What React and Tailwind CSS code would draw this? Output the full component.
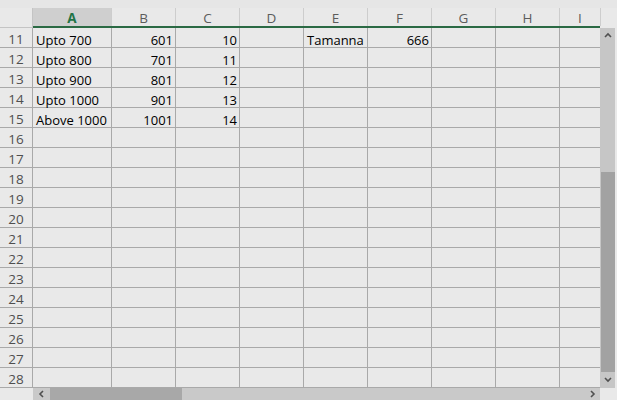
import React from "react";

const COLS = [
  { key: "A", w: "w-[79px]" },
  { key: "B", w: "w-[64px]" },
  { key: "C", w: "w-[64px]" },
  { key: "D", w: "w-[64px]" },
  { key: "E", w: "w-[64px]" },
  { key: "F", w: "w-[64px]" },
  { key: "G", w: "w-[64px]" },
  { key: "H", w: "w-[64px]" },
  { key: "I", w: "w-[41px]" },
];

// row number -> cell values (numbers right aligned)
const DATA = {
  11: { A: "Upto 700", B: 601, C: 10, E: "Tamanna", F: 666 },
  12: { A: "Upto 800", B: 701, C: 11 },
  13: { A: "Upto 900", B: 801, C: 12 },
  14: { A: "Upto 1000", B: 901, C: 13 },
  15: { A: "Above 1000", B: 1001, C: 14 },
};

const ROWS = Array.from({ length: 18 }, (_, i) => 11 + i);

const Chevron = ({ dir }) => {
  const d = {
    up: "M1 5 L4 2 L7 5",
    down: "M1 2 L4 5 L7 2",
    left: "M5 1 L2 4 L5 7",
    right: "M2 1 L5 4 L2 7",
  }[dir];
  return (
    <svg width="8" height="8" viewBox="0 0 8 8">
      <path d={d} fill="none" stroke="#505050" strokeWidth="1.6" />
    </svg>
  );
};

export default function App() {
  return (
    <div
      className="w-[617px] h-[400px] overflow-hidden bg-[#e9e9e9] flex flex-col"
      style={{ fontFamily: '"Open Sans", "Liberation Sans", sans-serif' }}
    >
      <div className="h-[8px] shrink-0 bg-[#e6e6e6]" />

      {/* column headers */}
      <div className="flex h-[20px] shrink-0">
        <div className="w-[33px] shrink-0 border-r border-b border-[#c4c4c4] bg-[#e9e9e9]" />
        <div className="flex w-[567px] border-b-2 border-[#2b6a44]">
          {COLS.map((c) => (
            <div
              key={c.key}
              className={`${c.w} shrink-0 flex items-center justify-center pt-[2px] text-[13.5px] border-r border-[#cdcdcd] ${
                c.key === "A" ? "bg-[#cfcfcf] text-[#217346] font-bold" : "text-[#5c5c5c]"
              }`}
            >
              {c.key}
            </div>
          ))}
        </div>
      </div>

      <div className="flex flex-1 min-h-0">
        {/* grid */}
        <div className="w-[600px] flex flex-col">
          {ROWS.map((r) => (
            <div key={r} className="flex h-[20px] shrink-0">
              <div className="w-[33px] shrink-0 flex items-center justify-center pt-[5px] leading-none text-[13.5px] text-[#4f4f4f] border-r border-b border-[#a9a9a9]">
                {r}
              </div>
              {COLS.map((c) => {
                const v = DATA[r]?.[c.key];
                const num = typeof v === "number";
                return (
                  <div
                    key={c.key}
                    className={`${c.w} shrink-0 flex items-center pt-[5px] leading-none text-[13px] text-black border-r border-b border-[#a9a9a9] ${
                      num ? "justify-end pr-[2px]" : "pl-[3px]"
                    } ${c.key === "I" ? "border-r-0" : ""}`}
                  >
                    {v}
                  </div>
                );
              })}
            </div>
          ))}
          {/* horizontal scrollbar */}
          <div className="flex h-[12px] shrink-0">
            <div className="w-[33px] shrink-0" />
            <div className="flex-1 bg-[#c9c9c9] flex items-center">
              <div className="w-[17px] flex justify-center">
                <Chevron dir="left" />
              </div>
              <div className="w-[132px] h-full bg-[#a8a8a8]" />
              <div className="flex-1" />
              <div className="w-[14px] flex justify-center">
                <Chevron dir="right" />
              </div>
            </div>
          </div>
        </div>

        {/* vertical scrollbar */}
        <div className="w-[15px] h-[360px] bg-[#c6c6c6] flex flex-col items-center">
          <div className="h-[16px] flex items-center">
            <Chevron dir="up" />
          </div>
          <div className="h-[128px]" />
          <div className="w-[14px] h-[200px] bg-[#a2a2a2]" />
          <div className="h-[16px] flex items-center">
            <Chevron dir="down" />
          </div>
        </div>
      </div>
    </div>
  );
}
